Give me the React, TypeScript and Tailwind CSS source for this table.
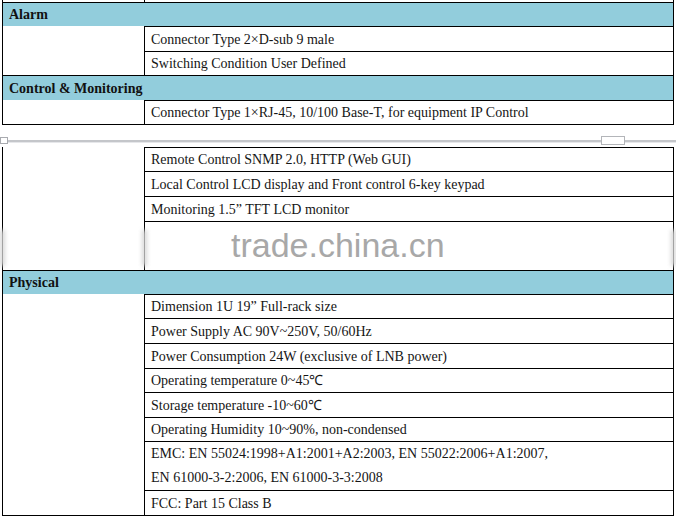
import React from 'react';

type Row = { text: React.ReactNode; h: string };

const headerCls =
  'border-t border-black bg-[#92cddc] pl-[6px] flex items-center font-bold text-[#111]';

const DataBlock = ({ rows }: { rows: Row[] }) => {
  return (
    <div className="flex">
      <div className="w-[142px] border-r border-black" />
      <div className="flex-1 flex flex-col">
        {rows.map((row, i) => (
          <div key={i} className={`${row.h} border-t border-black pl-[6px] flex items-center`}>
            {row.text}
          </div>
        ))}
      </div>
    </div>
  );
};

const App: React.FunctionComponent = () => {
  return (
    <div className="relative w-[676px] h-[516px] overflow-hidden bg-white text-[14px] text-[#151515] font-['Liberation_Serif','Times_New_Roman',serif]">
      {/* first part of the spec table */}
      <div className="ml-[2px] w-[672px] border-x border-b border-black">
        <div className="flex h-[2px]">
          <div className="w-[142px] border-r border-black" />
        </div>
        <div className={`h-[24px] ${headerCls}`}>Alarm</div>
        <DataBlock
          rows={[
            { text: 'Connector Type 2×D-sub 9 male', h: 'h-[25px]' },
            { text: 'Switching Condition User Defined', h: 'h-[24px]' },
          ]}
        />
        <div className={`h-[25px] ${headerCls}`}>Control &amp; Monitoring</div>
        <DataBlock
          rows={[{ text: 'Connector Type 1×RJ-45, 10/100 Base-T, for equipment IP Control', h: 'h-[24px]' }]}
        />
      </div>

      {/* page break */}
      <div className="relative h-[22px]">
        <div className="absolute left-0 right-0 top-[15px] h-[2px] bg-[#c4c6ca]" />
        <div className="absolute left-0 right-0 top-[17px] h-[1px] bg-[#e6e7ea]" />
        <div className="absolute left-0 top-[12px] w-[8px] h-[7px] border border-[#a9abb0] bg-white" />
        <div className="absolute left-[601px] top-[11px] w-[24px] h-[9px] border border-[#b3b5b9] bg-white" />
      </div>

      {/* second part of the spec table */}
      <div className="ml-[2px] w-[672px] border-x border-b border-black">
        <div className="flex">
          <div className="w-[142px] border-r border-black" />
          <div className="flex-1 flex flex-col">
            <div className="h-[24px] border-t border-black pl-[6px] flex items-center">
              Remote Control SNMP 2.0, HTTP (Web GUI)
            </div>
            <div className="h-[25px] border-t border-black pl-[6px] flex items-center">
              Local Control LCD display and Front control 6-key keypad
            </div>
            <div className="h-[25px] border-t border-black pl-[6px] flex items-center">
              Monitoring 1.5” TFT LCD monitor
            </div>
            <div className="h-[49px] border-t border-black" />
          </div>
        </div>
        <div className={`h-[24px] ${headerCls}`}>Physical</div>
        <DataBlock
          rows={[
            { text: 'Dimension 1U 19” Full-rack size', h: 'h-[24px]' },
            { text: 'Power Supply AC 90V~250V, 50/60Hz', h: 'h-[25px]' },
            { text: 'Power Consumption 24W (exclusive of LNB power)', h: 'h-[25px]' },
            { text: 'Operating temperature 0~45℃', h: 'h-[24px]' },
            { text: 'Storage temperature -10~60℃', h: 'h-[25px]' },
            { text: 'Operating Humidity 10~90%, non-condensed', h: 'h-[24px]' },
            {
              text: (
                <div className="leading-[24px]">
                  <div>EMC: EN 55024:1998+A1:2001+A2:2003, EN 55022:2006+A1:2007,</div>
                  <div>EN 61000-3-2:2006, EN 61000-3-3:2008</div>
                </div>
              ),
              h: 'h-[49px]',
            },
            { text: 'FCC: Part 15 Class B', h: 'h-[25px]' },
          ]}
        />
      </div>

      {/* watermark */}
      <div className="absolute left-[231px] top-[225px] text-[34px] leading-[40px] text-[#a8a8a8] font-['Liberation_Sans',Arial,sans-serif]">
        trade.china.cn
      </div>
      <div className="absolute left-[0px] top-[230px] w-[5px] h-[36px] bg-[#d8d8d8] blur-[2px]" />
      <div className="absolute left-[142px] top-[230px] w-[5px] h-[36px] bg-[#d8d8d8] blur-[2px]" />
      <div className="absolute left-[671px] top-[230px] w-[5px] h-[36px] bg-[#d8d8d8] blur-[2px]" />
    </div>
  );
};

export default App;
